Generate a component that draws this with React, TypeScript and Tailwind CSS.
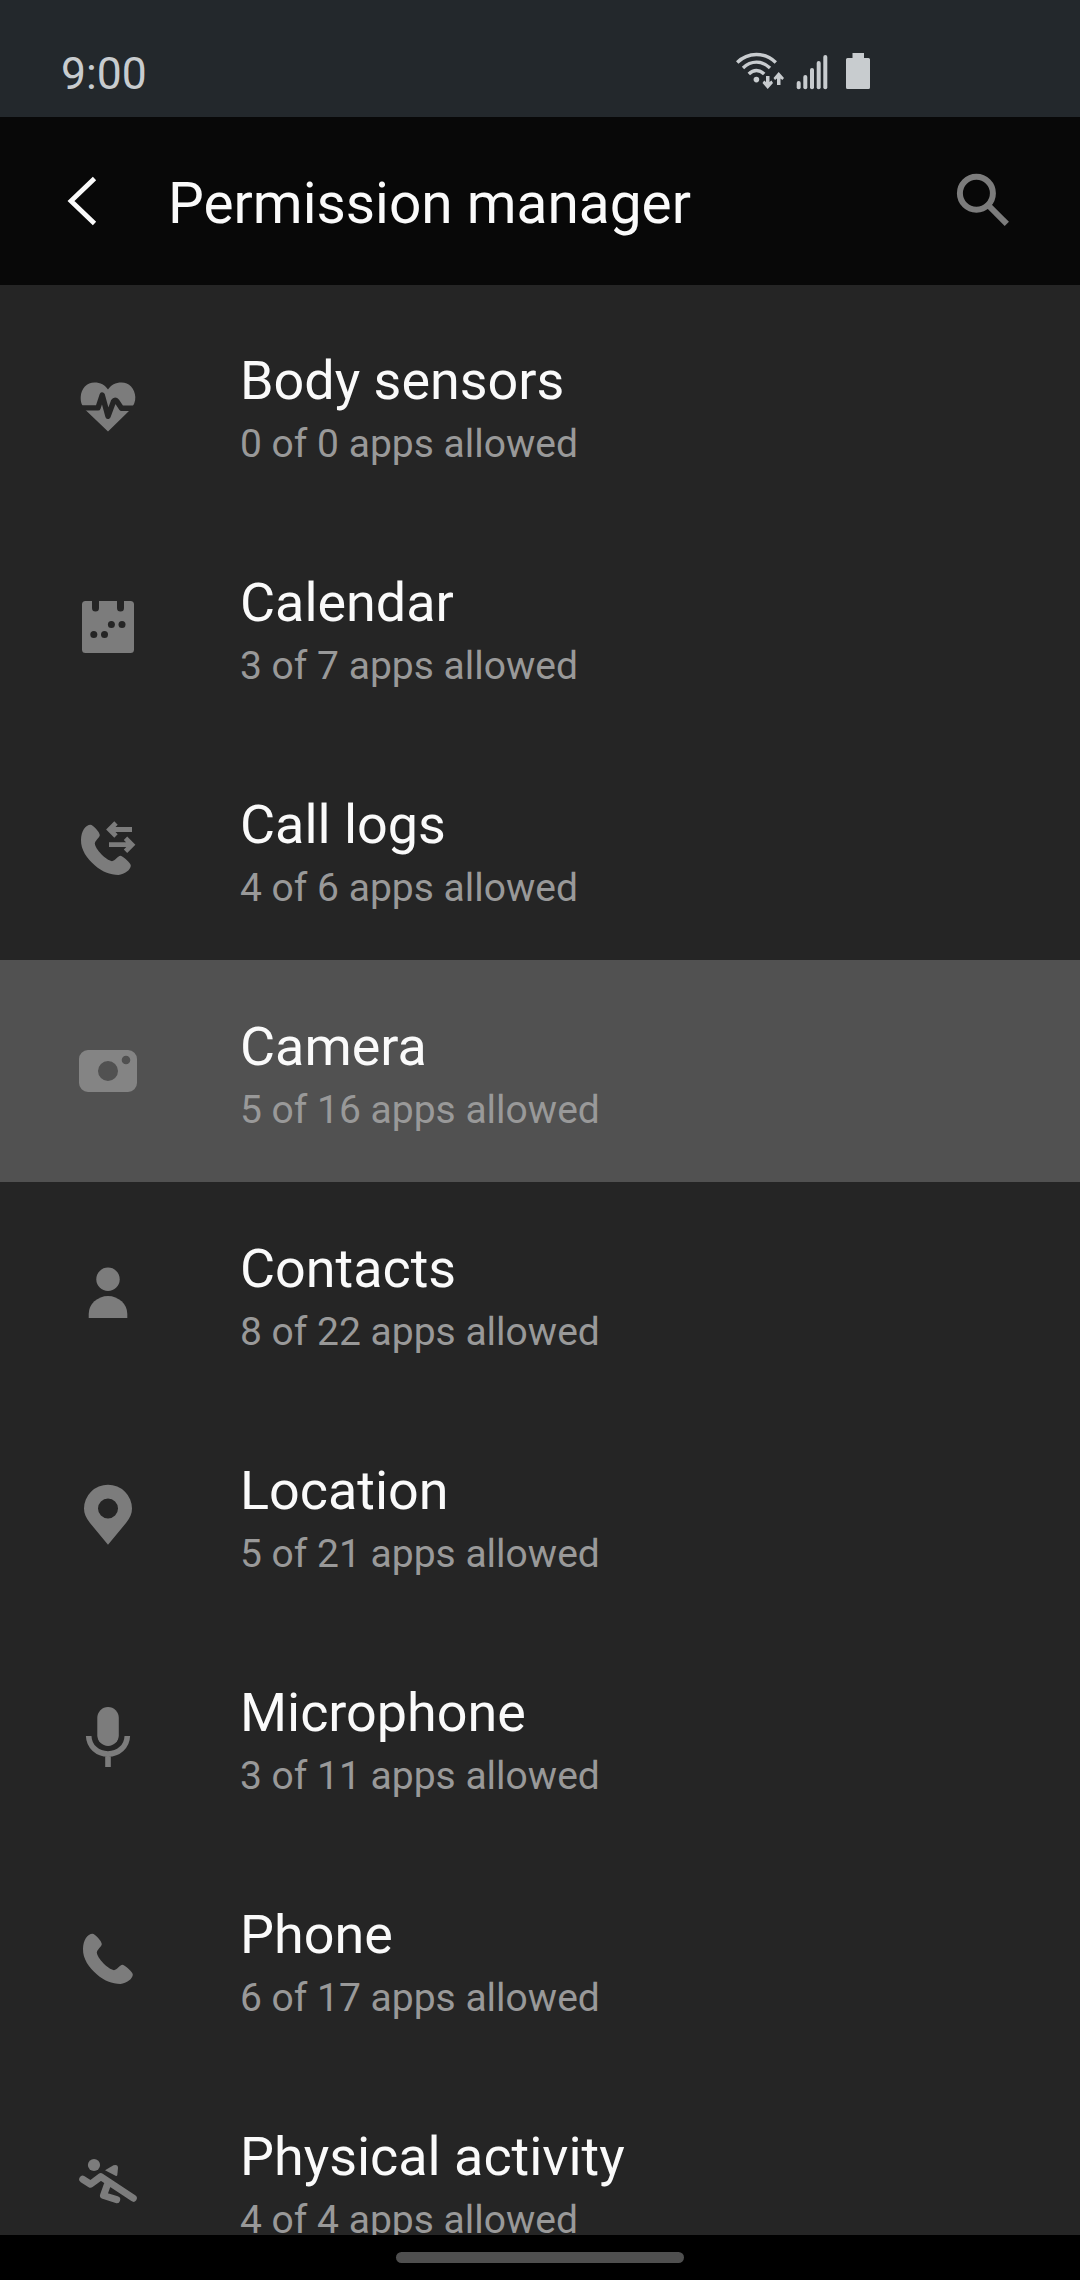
import React from 'react';

interface Permission {
  name: string;
  allowed: number;
  total: number;
  icon: React.ReactNode;
  active?: boolean;
}

const HANDSET =
  'M30.5 24.8C25.5 25 21.2 31 21 40C20.8 50 27 58.5 35 65.5C42 71.5 50 75 58.5 75C64.5 74.5 71 69.5 70.8 65.5C70.6 63 63.5 56.5 60.5 55.8C57.5 56 55 61 52 61.2C46 60 35.5 49.5 34.8 43.5C35 40.5 39.8 37.5 39.8 35C39.6 32 33 25 30.5 24.8Z';

// Every icon is drawn in a 100x100 box
const PERMISSIONS: Permission[] = [
  {
    name: 'Body sensors',
    allowed: 0,
    total: 0,
    icon: (
      <g transform="translate(0 0.5)">
        <path d="M48 71L25.5 49.5C21.5 45 20.5 41 20.7 36.5C21 28 27 22 34.5 22C40.5 22 45 24.5 48 29C51 24.5 55.5 22 61.5 22C69 22 75 28 75.3 36.5C75.5 41 74 45 70 49.5Z" />
        <path
          d="M20 47.4H38L42.2 34.5L48 55.8L53.5 41Q55 38.5 57 41L61.5 47.8H77"
          fill="none"
          stroke="#252525"
          strokeWidth="5.4"
          strokeLinejoin="round"
        />
      </g>
    ),
  },
  {
    name: 'Calendar',
    allowed: 3,
    total: 7,
    icon: (
      <g transform="translate(0 -2)">
        <path d="M25.5 21H32V28A3.5 3.5 0 0 0 39 28V21H57V28A3.5 3.5 0 0 0 64 28V21H70.5A3.5 3.5 0 0 1 74 24.5V69.5A3.5 3.5 0 0 1 70.5 73H25.5A3.5 3.5 0 0 1 22 69.5V24.5A3.5 3.5 0 0 1 25.5 21Z" />
        <g fill="#252525">
          <circle cx="51.4" cy="44.5" r="3.5" />
          <circle cx="62" cy="44.5" r="3.5" />
          <circle cx="33.8" cy="54.6" r="3.5" />
          <circle cx="44.5" cy="54.6" r="3.5" />
        </g>
      </g>
    ),
  },
  {
    name: 'Call logs',
    allowed: 4,
    total: 6,
    icon: (
      <g transform="translate(0 -4)">
        <path d={HANDSET} />
        <path
          d="M72 29.5H49.5M56 23L49.5 29.5L56 36M49 44.7H72M65.500 38.2L72 44.7L65.5 51.2"
          fill="none"
          stroke="#7c7c7c"
          strokeWidth="4.8"
        />
      </g>
    ),
  },
  {
    name: 'Camera',
    allowed: 5,
    total: 16,
    active: true,
    icon: (
      <path
        transform="translate(0 -6)"
        fill="#848484"
        fillRule="evenodd"
        d="M28 30H68A9 9 0 0 1 77 39V63A9 9 0 0 1 68 72H28A9 9 0 0 1 19 63V39A9 9 0 0 1 28 30ZM48 41A10 10 0 1 0 48 61A10 10 0 1 0 48 41ZM66 35.7A4.3 4.3 0 1 0 66 44.3A4.3 4.3 0 1 0 66 35.7Z"
      />
    ),
  },
  {
    name: 'Contacts',
    allowed: 8,
    total: 22,
    icon: (
      <g transform="translate(0 -8)">
        <circle cx="48" cy="39.3" r="11.7" />
        <path d="M28.7 78V74A19.3 18 0 0 1 67.3 74V78Z" />
      </g>
    ),
  },
  {
    name: 'Location',
    allowed: 5,
    total: 21,
    icon: (
      <path
        transform="translate(0 -10)"
        fillRule="evenodd"
        d="M48 84.7L30 63C26 58 24 53.5 24 48.5A24 23.7 0 0 1 72 48.5C72 53.5 70 58 66 63ZM48 38.5A10 10 0 1 0 48 58.5A10 10 0 1 0 48 38.5Z"
      />
    ),
  },
  {
    name: 'Microphone',
    allowed: 3,
    total: 11,
    icon: (
      <g transform="translate(0 -12)">
        <rect x="37.3" y="27" width="21.5" height="39" rx="10.7" />
        <path
          d="M28.7 56C29 66.5 37.5 74 48 74S67 66.5 67.3 56M48 74V87"
          fill="none"
          stroke="#7c7c7c"
          strokeWidth="5.6"
        />
      </g>
    ),
  },
  {
    name: 'Phone',
    allowed: 6,
    total: 17,
    icon: <path d={HANDSET} transform="translate(2 -5)" />,
  },
  {
    name: 'Physical activity',
    allowed: 4,
    total: 4,
    icon: (
      <g transform="translate(0 4)">
        <circle cx="34" cy="25" r="6.1" />
        <path d="M45 30.3L53.5 25.3Q58 24 58 28L57.3 35Q57 36.5 55.5 35.8Z" />
        <path
          d="M22.7 39.2L30.5 44.3L40.8 36.6L73.3 58.2M48.3 42L43.5 55.5L56.7 59.6"
          fill="none"
          stroke="#7c7c7c"
          strokeWidth="7"
          strokeLinecap="round"
          strokeLinejoin="round"
        />
      </g>
    ),
  },
];

const StatusBar: React.FC = () => (
  <div className="h-[117px] shrink-0 bg-[#23282c] flex items-start justify-between pl-[61px] pr-[208px] text-[#c8cccf]">
    <span className="mt-12 text-[44.5px] leading-[53px]">9:00</span>
    <svg className="mt-[50px]" width="136" height="42" viewBox="0 0 136 42" fill="currentColor">
      <g fill="none" stroke="currentColor" strokeWidth="3.4">
        <path d="M1.2 12.5C12 1.8 28.8 1.8 39.8 12.5" />
        <path d="M7 18C15 10.2 26 10.2 34 18" />
        <path d="M12.8 24C17.5 19.3 23.5 19.3 28.2 24" />
      </g>
      <circle cx="20.4" cy="29.6" r="2.8" />
      <path d="M30 26H33.5V32L35.5 30.5L37 33L31.7 39L26.5 33L28.2 30.5L30 32ZM41 35V28.5L39 30L37.5 28L42.7 22L48 28L46.3 30L44.5 28.5V35Z" />
      <rect x="60.7" y="31" width="4" height="8.2" rx="2" />
      <rect x="67.3" y="25" width="4" height="14.2" rx="2" />
      <rect x="74" y="18" width="4" height="21.2" rx="2" />
      <rect x="80.7" y="11" width="4" height="28.2" rx="2" />
      <rect x="87.3" y="5" width="4" height="34.2" rx="2" />
      <path d="M116.5 3H128V8H132.5Q134 8 134 9.5V37.5Q134 39 132.5 39H111.5Q110 39 110 37.5V9.5Q110 8 111.5 8H116.5Z" />
    </svg>
  </div>
);

const Header: React.FC = () => (
  <header className="h-[168px] shrink-0 bg-[#080808] flex items-center pl-[66px] pr-[68px]">
    <button aria-label="Back">
      <svg width="32" height="50" viewBox="0 0 32 50" fill="none" stroke="#fafafa" strokeWidth="4.8">
        <path d="M28.5 2.5L5 25L28.5 47.5" />
      </svg>
    </button>
    <h1 className="ml-[70px] mt-[5px] flex-1 text-[56.8px] leading-[67px] text-[#fafafa]">Permission manager</h1>
    <button aria-label="Search">
      <svg width="56" height="56" viewBox="0 0 56 56" fill="none" stroke="#7c7c7c" strokeWidth="6">
        <circle cx="20.4" cy="20.3" r="16.5" />
        <path d="M32 32L50.8 50.8" />
      </svg>
    </button>
  </header>
);

const PermissionRow: React.FC<{ item: Permission }> = ({ item }) => (
  <li className={`h-[222px] shrink-0 flex items-start pl-[60px] ${item.active ? 'bg-[#515151]' : ''}`}>
    <svg className="mt-[66px] shrink-0" width="100" height="100" viewBox="0 0 100 100" fill="#7c7c7c">
      {item.icon}
    </svg>
    <div className="ml-20 mt-[55px]">
      <p className="text-[53.9px] leading-[64px] text-[#fafafa]">{item.name}</p>
      <p className="text-[39px] leading-[46px] mt-2 text-[#999999]">
        {item.allowed} of {item.total} apps allowed
      </p>
    </div>
  </li>
);

export default function App() {
  return (
    <div className="w-[1080px] h-[2280px] flex flex-col overflow-hidden bg-[#252525] font-[Roboto,sans-serif]">
      <StatusBar />
      <Header />
      <ul className="flex-1 min-h-0 overflow-hidden flex flex-col pt-[9px]">
        {PERMISSIONS.map(item => (
          <PermissionRow key={item.name} item={item} />
        ))}
      </ul>
      <div className="h-[45px] shrink-0 bg-black flex items-start justify-center pt-[17px]">
        <div className="w-[288px] h-[11px] rounded-full bg-[#4f4f4f]" />
      </div>
    </div>
  );
}
